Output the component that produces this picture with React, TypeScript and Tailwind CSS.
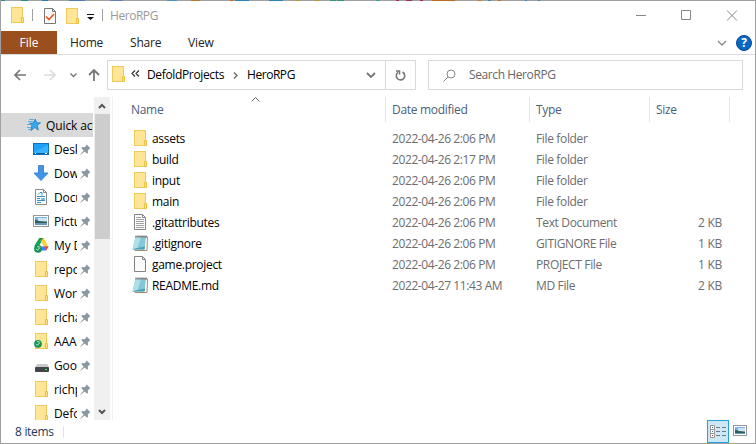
import React from "react";

type P = { className?: string };

const Folder = ({ className = "" }: P) => (
  <svg width="14" height="16" viewBox="0 0 14 16" className={`shrink-0 ${className}`}>
    <rect x="0.5" y="0.5" width="11" height="15" fill="#ffe596" stroke="#edca5c" />
    <path d="M10.5 15.5v-5h2v5z" fill="#ffe07d" stroke="#e9c145" />
  </svg>
);

const Pin = () => (
  <svg width="11" height="11" viewBox="0 0 11 11" className="shrink-0">
    <path d="M6.4 0.3l4 4-1.2 0.7-1.4 1.5 0.2 2.2-1 1-2.3-2.2-4 3.2-0.4-0.3 3.4-4-2.5-2.3 1-1 2.4 0.2 1.6-1.5z" fill="#8b97a1" />
  </svg>
);

const Star = () => (
  <svg width="14" height="14" viewBox="0 0 14 14">
    <path d="M8.300 1l1.300 3.800h4l-3.300 2.500 1 4.800-3.500-2.500-4 3 1.100-4.800-2.300-2.600 3.700-.2z" fill="#37a7ee" stroke="#187dc4" strokeWidth=".8" />
    <path d="M2 1.500h5M1 3.500h5M0 6.500h3M0 9.500h4M1 11.500h3" stroke="#4aa5de" strokeWidth=".8" />
  </svg>
);

const Desktop = () => (
  <svg width="16" height="12" viewBox="0 0 16 12">
    <rect x=".5" y=".5" width="15" height="11" fill="#1ba0fa" stroke="#0d70bd" />
    <path d="M1 9L15 2v8H1z" fill="#38b1ff" />
    <path d="M1 10.500h14" stroke="#075d9f" />
    <path d="M2 10.500h1M12 10.500h2" stroke="#fff" />
  </svg>
);

const Download = () => (
  <svg width="16" height="16" viewBox="0 0 16 16">
    <path d="M5.500.5h5v7.500h4.500L8 15.500 1 8h4.500z" fill="#4095e8" stroke="#2c7ac9" strokeWidth=".8" />
  </svg>
);

const Documents = () => (
  <svg width="12" height="16" viewBox="0 0 12 16">
    <path d="M.5.5h8l3 3v12H.5z" fill="#fff" stroke="#8a8a8a" />
    <path d="M8.500.5v3h3" fill="none" stroke="#8a8a8a" />
    <path d="M3 5.500l2-2h2v3M2 7.500h8M2 9.500h3M2 11.500h8M2 13.500h4" fill="none" stroke="#348cc7" />
    <path d="M6 9h4v2H6z" fill="#72bbe6" />
  </svg>
);

const Picture = ({ w = 16, h = 12 }: { w?: number; h?: number }) => (
  <svg width={w} height={h} viewBox={`0 0 ${w} ${h}`}>
    <rect x=".5" y=".5" width={w - 1} height={h - 1} fill="#fff" stroke="#969696" />
    <path d={`M2 2h${w - 4}v4H2z`} fill="#79b4ed" />
    <path d={`M5 3h${w - 7}v3H5z`} fill="#cce4f8" />
    <path d={`M2 4.500l4 1.500 ${w - 8} .5v2H2z`} fill="#2f5f5c" />
    <path d={`M2 8h${w - 4}v${h - 10}H2z`} fill="#6598b9" />
  </svg>
);

const Check = () => (
  <>
    <circle cx="4" cy="11.800" r="3.900" fill="#159451" />
    <path d="M2 11.800l1.500 1.500L6 10.400M3 9.800h2.500" fill="none" stroke="#d9fae6" strokeWidth=".9" />
  </>
);

const Drive = () => (
  <svg width="15" height="16" viewBox="0 0 15 16">
    <path d="M5.200 1h4.500l-5 8.500H0z" fill="#13a45c" />
    <path d="M5.200 1h4.500l4.500 8.500H9.800z" fill="#ffcf38" />
    <path d="M3 9.500h11.500L12 13.500H1z" fill="#3e82ed" />
    <path d="M10 9.500h4.500L12 13.500z" fill="#ee493c" />
    <path d="M5 1h4L7.400 4z" fill="#0f8e4c" />
    <Check />
  </svg>
);

const SyncFolder = () => (
  <svg width="15" height="16" viewBox="-1 0 15 16" className="ml-px">
    <rect x="0.500" y="0.500" width="11" height="15" fill="#ffe596" stroke="#edca5c" />
    <path d="M10.500 15.500v-5h2v5z" fill="#ffe07d" stroke="#e9c145" />
    <g transform="translate(-1 -1)"><Check /></g>
  </svg>
);

const Disk = () => (
  <svg width="14" height="8" viewBox="0 0 14 8" className="mt-[6px] ml-px">
    <path d="M2 0h10l2 3H0z" fill="#c7c9cb" />
    <rect y="3" width="14" height="5" rx="1" fill="#414448" />
    <path d="M10 5.500h2" stroke="#29ff45" />
  </svg>
);

const Page = ({ lines = false }: { lines?: boolean }) => (
  <svg width="12" height="16" viewBox="0 0 12 16">
    <path d="M.5.5h8l3 3v12H.5z" fill="#fbfbfb" stroke="#858585" />
    <path d="M8.500.5v3h3" fill="none" stroke="#858585" />
    {lines && <path d="M2 3.500h5M2 5.500h8M2 7.500h8M2 9.500h8M2 11.500h8M2 13.500h8" stroke="#a3a3a3" />}
  </svg>
);

const Notepad = () => (
  <svg width="16" height="16" viewBox="0 0 16 16">
    <path d="M5 2h10.500l-.5 13.500H3z" fill="#fff" stroke="#a58c6b" />
    <path d="M3.500 2H14l-1.500 12.500H.5z" fill="#83c7d8" />
    <path d="M3.500 2H9L5 14.500H.5z" fill="#addfe8" />
    <path d="M3 13.500L.5 14.500h12l.5-3z" fill="#4d9eb6" />
    <path d="M3.500 1.500h11" stroke="#454d51" strokeWidth="2" strokeDasharray="1 1" />
  </svg>
);

const Chevron = ({ className = "", d = "M1 1l4 4 4-4", w = 10, h = 6, s = 1 }: P & { d?: string; w?: number; h?: number; s?: number }) => (
  <svg width={w} height={h} viewBox={`0 0 ${w} ${h}`} className={`shrink-0 ${className}`} fill="none" stroke="currentColor" strokeWidth={s}>
    <path d={d} />
  </svg>
);

const places: [string, React.ReactNode][] = [
  ["Desktop", <Desktop />],
  ["Downloads", <Download />],
  ["Documents", <Documents />],
  ["Pictures", <Picture />],
  ["My Drive", <Drive />],
  ["repos", <Folder className="ml-0.5" />],
  ["Work", <Folder className="ml-0.5" />],
  ["richard", <Folder className="ml-0.5" />],
  ["AAA", <SyncFolder />],
  ["Google", <Disk />],
  ["richp", <Folder className="ml-0.5" />],
  ["Defold", <Folder className="ml-0.5" />],
];

const files: [string, string, string, string, React.ReactNode][] = [
  ["assets", "2022-04-26 2:06 PM", "File folder", "", <Folder className="ml-0.5" />],
  ["build", "2022-04-26 2:17 PM", "File folder", "", <Folder className="ml-0.5" />],
  ["input", "2022-04-26 2:06 PM", "File folder", "", <Folder className="ml-0.5" />],
  ["main", "2022-04-26 2:06 PM", "File folder", "", <Folder className="ml-0.5" />],
  [".gitattributes", "2022-04-26 2:06 PM", "Text Document", "2 KB", <Page lines />],
  [".gitignore", "2022-04-26 2:06 PM", "GITIGNORE File", "1 KB", <Notepad />],
  ["game.project", "2022-04-26 2:06 PM", "PROJECT File", "1 KB", <Page />],
  ["README.md", "2022-04-27 11:43 AM", "MD File", "2 KB", <Notepad />],
];

// Slivers of the desktop showing along the window's top edge.
const edge: [number, number, string][] = [
  [0, 5, "#2b8f80"], [21, 7, "#2b8f80"], [42, 6, "#2e78a8"], [69, 16, "#4f7cb5"], [110, 13, "#6a7fb5"],
  [167, 10, "#5592bb"], [191, 9, "#b87a30"], [230, 3, "#c26a2b"], [235, 14, "#2e80b5"], [269, 14, "#2e80b5"],
  [296, 4, "#b59a2b"], [315, 4, "#b59a2b"], [330, 6, "#2b9a80"], [337, 7, "#2b9a80"], [376, 4, "#3aa0a0"],
  [396, 3, "#a52d5c"], [406, 6, "#a52d5c"], [420, 3, "#a52d5c"], [432, 23, "#bd6a22"], [478, 3, "#c7792b"],
  [488, 3, "#3b84b5"], [498, 3, "#bd6a22"], [525, 2, "#3b84b5"], [538, 2, "#3b84b5"],
];

export default function App() {
  return (
    <div className="flex h-[444px] w-[756px] flex-col overflow-hidden border-x border-b border-[#a0a0a0] bg-white font-['Open_Sans','Noto_Sans',sans-serif] text-[12px] leading-[16px] tracking-[-0.3px] whitespace-nowrap text-black">
      <svg width="754" height="1" viewBox="1 0 754 1" className="shrink-0 bg-[#a0a0a0]">
        {edge.map(([x, w, fill]) => <rect key={x} x={x} width={w} height="1" fill={fill} />)}
      </svg>
      <header className="flex h-[30px] shrink-0 items-center pb-[2px]">
        <Folder className="ml-[10px]" />
        <span className="ml-[7px] h-3 w-px bg-[#a0a0a0]" />
        <svg width="12" height="16" viewBox="0 0 12 16" className="mt-[2px] ml-[11px]">
          <path d="M.5.5h8l3 3v12H.5z" fill="#fafafa" stroke="#777" />
          <path d="M8.500.5v3h3" fill="none" stroke="#777" />
          <path d="M2 8.500l3 3L10 6" fill="none" stroke="#ee5a24" strokeWidth="1.700" />
        </svg>
        <Folder className="mt-[2px] ml-[10px]" />
        <svg width="7" height="6" viewBox="0 0 7 6" className="mt-1 ml-[7px]"><path d="M0 0h7v1H0zM0 3h7L3.500 6z" fill="#111" /></svg>
        <span className="ml-[8px] h-3 w-px bg-[#a0a0a0]" />
        <span className="ml-[7px] pt-px tracking-[-0.45px] text-[#999]">HeroRPG</span>
        <svg width="102" height="11" viewBox="0 0 102 11" className="mr-[17px] ml-auto" fill="none" stroke="#858585">
          <path d="M0 5.500h10M45.500.5h9v9h-9zM91 .5l10 10M101 .5l-10 10" />
        </svg>
      </header>

      <nav className="flex h-6 shrink-0 items-stretch border-b border-[#dadbdc] text-[#222]">
        <span className="flex w-14 items-center justify-center bg-[#9b4f1f] pt-px tracking-normal text-white">File</span>
        <span className="flex w-[58px] items-center pt-px pl-[13px] tracking-[-0.2px]">Home</span>
        <span className="flex w-[60px] items-center pt-px pl-[15px] tracking-[-0.2px]">Share</span>
        <span className="flex w-[52px] items-center pt-px pl-[13px] tracking-[-0.1px]">View</span>
        <span className="ml-auto flex items-center pr-[3px]">
          <Chevron className="mr-[9px] text-[#888]" s={1.3} />
          <span className="flex size-4 items-center justify-center rounded-full border border-[#06488d] bg-[#0868c8] text-[12px] font-bold tracking-normal text-white">?</span>
        </span>
      </nav>

      <div className="flex h-[41px] shrink-0 items-start pt-[5px]">
        <div className="flex h-[30px] w-[106px] items-center text-[#777]">
          <svg width="12" height="12" viewBox="0 0 12 12" className="ml-[13px]" fill="none" stroke="currentColor" strokeWidth="1.700"><path d="M12 6H1M6 1L1 6l5 5" /></svg>
          <svg width="12" height="12" viewBox="0 0 12 12" className="ml-[18px] text-[#dcdcdc]" fill="none" stroke="currentColor" strokeWidth="1.700"><path d="M0 6h11M6 1l5 5-5 5" /></svg>
          <Chevron className="ml-[14px]" w={7} h={5} d="M.5.5l3 3 3-3" s={1.4} />
          <svg width="12" height="12" viewBox="0 0 12 12" className="ml-[11px]" fill="none" stroke="currentColor" strokeWidth="1.800"><path d="M6 12V1M1 6l5-5 5 5" /></svg>
        </div>
        <div className="flex h-[30px] w-[309px] items-center border border-[#d9d9d9]">
          <Folder className="mb-[2px] ml-1" />
          <Chevron className="mb-[3px] ml-[5px] text-[#333]" w={9} h={7} d="M4 .5l-3 3 3 3M8 .5l-3 3 3 3" s={1.2} />
          <span className="ml-[7px] w-[78px] tracking-[-0.35px]">DefoldProjects</span>
          <Chevron className="ml-[8px] text-[#666]" w={5} h={7} d="M1 .5l3 3-3 3" s={1.3} />
          <span className="ml-[9px] tracking-[-0.45px]">HeroRPG</span>
          <Chevron className="ml-auto text-[#777]" s={1.9} />
          <span className="ml-[9px] flex h-full w-[30px] items-center justify-center border-l border-[#d9d9d9]">
            <svg width="11" height="11" viewBox="0 0 11 11" fill="none" stroke="#777" strokeWidth="1.600"><path d="M7.500 2a4.200 4.200 0 1 1-4.600.4M1 1h3.500v3.500" /></svg>
          </span>
        </div>
        <div className="ml-3 flex h-[30px] w-[315px] items-center border border-[#d9d9d9] text-[#666]">
          <svg width="13" height="13" viewBox="0 0 13 13" className="ml-[14px]" fill="none" stroke="#888"><circle cx="8" cy="5" r="4" /><path d="M5 8L.5 12.500" /></svg>
          <span className="ml-[13px] tracking-[-0.4px]">Search HeroRPG</span>
        </div>
      </div>

      <main className="flex h-[324px] shrink-0 overflow-hidden pt-px">
        <aside className="flex w-[112px] border-r border-[#f0f0f0]">
          <div className="w-[92px] overflow-hidden pt-4">
            <div className="flex h-6 items-center bg-[#d9d9d9] pl-[26px]">
              <Star />
              <span className="ml-[5px] w-[47px] overflow-hidden pt-px tracking-[-0.1px]">Quick access</span>
            </div>
            {places.map(([name, icon]) => (
              <div key={name} className="flex h-6 items-center pl-8">
                <span className="flex w-4 shrink-0 justify-center">{icon}</span>
                <span className="ml-[5px] w-[23px] shrink-0 overflow-hidden pt-px tracking-[-0.1px]">{name}</span>
                <span className="ml-[3px]"><Pin /></span>
              </div>
            ))}
          </div>
          <div className="ml-px flex w-4 flex-col items-center bg-[#f0f0f0]">
            <span className="flex h-[17px] shrink-0 items-center text-[#555]"><Chevron w={8} h={6} d="M1 5l3-3 3 3" s={2} /></span>
            <span className="h-[125px] w-[15px] shrink-0 bg-[#cdcdcd]" />
            <span className="mt-auto flex h-[17px] items-center text-[#555]"><Chevron w={8} h={6} d="M1 1l3 3 3-3" s={2} /></span>
          </div>
        </aside>

        <section className="flex-1">
          <div className="relative flex h-[25px] items-center text-[#4c607a]">
            <Chevron className="absolute top-0 left-[138px] text-[#666]" w={9} h={5} d="M.5 4.500l4-4 4 4" />
            <span className="flex h-full w-[273px] items-center border-r border-[#e5e5e5] pt-px pl-[18px]">Name</span>
            <span className="flex h-full w-36 items-center border-r border-[#e5e5e5] pt-px pl-[6px]">Date modified</span>
            <span className="flex h-full w-[120px] items-center border-r border-[#e5e5e5] pt-px pl-[6px]">Type</span>
            <span className="flex h-full w-20 items-center border-r border-[#e5e5e5] pt-px pl-[6px]">Size</span>
          </div>
          <div className="pt-[6px]">
            {files.map(([name, date, type, size, icon]) => (
              <div key={name} className="flex h-[21px] items-center text-[#6d6d6d]">
                <span className="mb-px ml-[19px] flex w-4 justify-center">{icon}</span>
                <span className="ml-1 w-[240px] pt-px text-black">{name}</span>
                <span className="w-36 pt-px tracking-[-0.4px]">{date}</span>
                <span className="w-[120px] pt-px tracking-[-0.35px]">{type}</span>
                <span className="w-[66px] pt-px text-right">{size}</span>
              </div>
            ))}
          </div>
        </section>
      </main>

      <footer className="flex h-[23px] shrink-0 items-center text-[#1e395b]">
        <span className="ml-[14px] w-[48px]">8 items</span>
        <span className="h-3 w-px bg-[#e5e5e5]" />
        <span className="ml-auto flex h-[23px] w-[22px] items-center justify-center border border-[#26a0da] bg-[#cce8f6]">
          <svg width="17" height="13" viewBox="0 0 17 13" fill="none">
            <path d="M.5.5h4v4h-4zM.5 4.500h4v4h-4zM.5 8.500h4v4h-4z" fill="#fff" stroke="#999" />
            <path d="M2 2.500h1M2 6.500h1" stroke="#3b78b5" /><path d="M2 10.500h1" stroke="#c33" />
            <path d="M6 2.500h4M12 2.500h4M6 6.500h4M12 6.500h4M6 10.500h4M12 10.500h4" stroke="#777" />
          </svg>
        </span>
        <span className="mr-2 mb-0.5 ml-1 flex"><Picture w={14} h={11} /></span>
      </footer>
    </div>
  );
}
